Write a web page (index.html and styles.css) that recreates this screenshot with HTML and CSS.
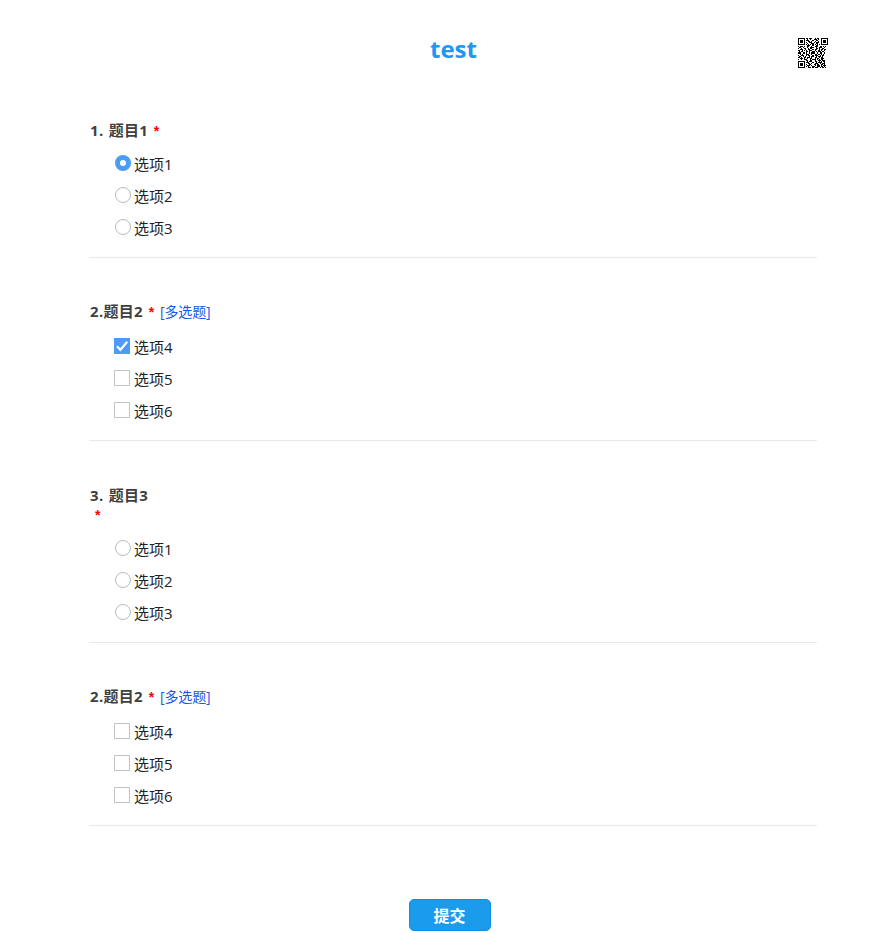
FILE: index.html
```html
<!DOCTYPE html>
<html lang="zh">
<head>
<meta charset="utf-8">
<title>test</title>
<link rel="stylesheet" href="styles.css">
</head>
<body>
<main class="page">
  <header class="head">
    <h1 class="title">test</h1>
    <svg class="qr" viewBox="0 0 29 29" shape-rendering="crispEdges" aria-hidden="true">
      <path d="M0 0h7v7H0zM1 1v5h5V1zM2 2h3v3H2zM22 0h7v7h-7zM23 1v5h5V1zM24 2h3v3h-3zM0 22h7v7H0zM1 23v5h5v-5zM2 24h3v3H2z" fill-rule="evenodd"/>
      <path class="qr-data" d="M8 .5h2m1 0h3m2 0h1m1 0h2M9 1.5h1m2 0h1m2 0h3m1 0h1M8 2.5h3m3 0h1m2 0h2M10 3.5h2m1 0h1m2 0h1m2 0h1M8 4.5h1m2 0h3m1 0h1m1 0h3M9 5.5h1m3 0h2m2 0h2M8 6.5h1m1 0h1m1 0h1m1 0h1m1 0h1m1 0h1m1 0h1M9 7.5h3m2 0h1m2 0h2M0 8.5h1m1 0h3m1 0h1m2 0h2m2 0h1m2 0h3m2 0h2m1 0h1m1 0h1M1 9.5h2m2 0h1m3 0h1m2 0h3m2 0h1m2 0h3m2 0h1M0 10.5h1m2 0h1m2 0h2m2 0h1m1 0h2m3 0h2m1 0h1m2 0h2M2 11.5h3m2 0h1m2 0h2m2 0h1m1 0h2m2 0h1m1 0h2m1 0h2M0 12.5h2m2 0h1m1 0h1m1 0h1m2 0h3m2 0h1m2 0h2m1 0h1m2 0h1M1 13.5h1m1 0h2m3 0h2m1 0h1m2 0h2m1 0h1m1 0h3m1 0h2M0 14.5h3m2 0h2m1 0h1m2 0h1m1 0h3m2 0h1m2 0h2m2 0h1M2 15.5h1m1 0h1m3 0h3m2 0h1m2 0h2m1 0h2m1 0h1m1 0h1M0 16.5h1m2 0h3m2 0h1m1 0h2m2 0h1m1 0h3m2 0h1m1 0h2M1 17.5h2m2 0h1m1 0h1m3 0h1m1 0h2m2 0h1m1 0h3m1 0h1M0 18.5h2m1 0h1m2 0h2m1 0h3m1 0h1m2 0h2m2 0h1m1 0h2M2 19.5h3m1 0h1m2 0h1m2 0h2m2 0h1m1 0h2m2 0h3M0 20.5h1m2 0h1m2 0h3m3 0h1m1 0h3m1 0h1m1 0h1m1 0h2M8 21.5h2m2 0h2m2 0h1m2 0h3m1 0h3M9 22.5h1m1 0h3m2 0h2m2 0h1m1 0h1m1 0h2M8 23.5h3m3 0h1m2 0h1m1 0h4m2 0h1M10 24.5h2m1 0h1m2 0h3m2 0h1m1 0h3M8 25.5h1m2 0h2m2 0h2m1 0h2m2 0h2m1 0h1M9 26.5h3m1 0h1m2 0h1m1 0h3m1 0h1m1 0h3M8 27.5h1m1 0h1m3 0h2m2 0h3m1 0h2m1 0h1M10 28.5h3m1 0h1m1 0h3m2 0h1m1 0h2m1 0h1"/>
    </svg>
  </header>

  <form class="survey">
    <section class="question">
      <div class="q-title">1. 题目1 <span class="req">*</span></div>
      <div class="option"><span class="radio on"></span><span>选项1</span></div>
      <div class="option"><span class="radio"></span><span>选项2</span></div>
      <div class="option"><span class="radio"></span><span>选项3</span></div>
    </section>

    <section class="question">
      <div class="q-title">2.题目2 <span class="req">*</span> <span class="multi">[多选题]</span></div>
      <div class="option"><span class="check on"><svg viewBox="0 0 16 16" aria-hidden="true"><path d="M3 8.2l3.4 3.6L13.2 3.8" fill="none" stroke="#fff" stroke-width="2.2"/></svg></span><span>选项4</span></div>
      <div class="option"><span class="check"></span><span>选项5</span></div>
      <div class="option"><span class="check"></span><span>选项6</span></div>
    </section>

    <section class="question">
      <div class="q-title stacked">3. 题目3<span class="req req-line">*</span></div>
      <div class="option"><span class="radio"></span><span>选项1</span></div>
      <div class="option"><span class="radio"></span><span>选项2</span></div>
      <div class="option"><span class="radio"></span><span>选项3</span></div>
    </section>

    <section class="question">
      <div class="q-title">2.题目2 <span class="req">*</span> <span class="multi">[多选题]</span></div>
      <div class="option"><span class="check"></span><span>选项4</span></div>
      <div class="option"><span class="check"></span><span>选项5</span></div>
      <div class="option"><span class="check"></span><span>选项6</span></div>
    </section>

    <div class="actions"><button class="submit" type="button">提交</button></div>
  </form>
</main>
</body>
</html>
```
FILE: styles.css
```css
* { box-sizing: border-box; }
html, body { margin: 0; background: #fff; }
body {
  font-family: "Open Sans", "Noto Sans", "Noto Sans CJK SC", sans-serif;
  color: #222;
  font-size: 15px;
  overflow: hidden;
}
.page { width: 884px; height: 933px; padding: 0 67px 0 90px; }
.head {
  height: 97px;
  position: relative;
  display: flex;
  justify-content: center;
  padding-top: 31px;
}
.title {
  margin: 0;
  font-size: 24px;
  line-height: 36px;
  font-weight: 700;
  color: #2196f3;
}
.qr { position: absolute; left: 708px; top: 38px; width: 30px; height: 30px; }
.qr-data { fill: none; stroke: #000; stroke-width: 1; }
.survey { margin-left: -1px; }
.question { border-bottom: 1px solid #e8e8e8; padding-bottom: 13px; margin-bottom: 44px; width: 728px; }
.q-title {
  font-weight: 700;
  color: #3f3f3f;
  font-size: 15px;
  line-height: 19px;
  letter-spacing: 0.3px;
  word-spacing: 1px;
  padding-left: 1px;
  margin-bottom: 9px;
}
.question:first-child .q-title { padding-top: 24px; margin-bottom: 7px; }
.q-title.stacked { padding-top: 1px; margin-bottom: 8px; }
.req { color: #f00; font-weight: 700; font-family: "Liberation Sans", sans-serif; font-size: 14px; margin-left: 0.5px; }
.req-line { display: block; margin: 1px 0 0; padding-left: 5px; }
.multi { color: #1a56e8; font-weight: 400; font-size: 14px; letter-spacing: -0.15px; margin-left: 0.5px; }
.option { height: 32px; display: flex; align-items: center; padding: 0 0 2px 26px; gap: 3px; }
.radio, .check {
  flex: none;
  width: 16px;
  height: 16px;
  border: 1px solid #c4c4c4;
  background: #fff;
  display: block;
}
.radio { border-radius: 50%; border: 1.5px solid #bbb; }
.radio.on { border: 5px solid #4a9cf5; }
.check { margin-left: -1px; margin-right: 1px; }
.check.on { background: #4a9cf5; border-color: #4a9cf5; }
.check svg { display: block; width: 16px; height: 16px; margin: -1px; }
.actions { display: flex; justify-content: center; padding-top: 29px; padding-right: 7px; }
.submit {
  width: 82px;
  height: 32px;
  border: 1px solid #0f8fe0;
  border-radius: 5px;
  background: #1a9bec;
  color: #fff;
  font: 700 16px "Open Sans", "Noto Sans CJK SC", sans-serif;
  padding: 0;
}
```
